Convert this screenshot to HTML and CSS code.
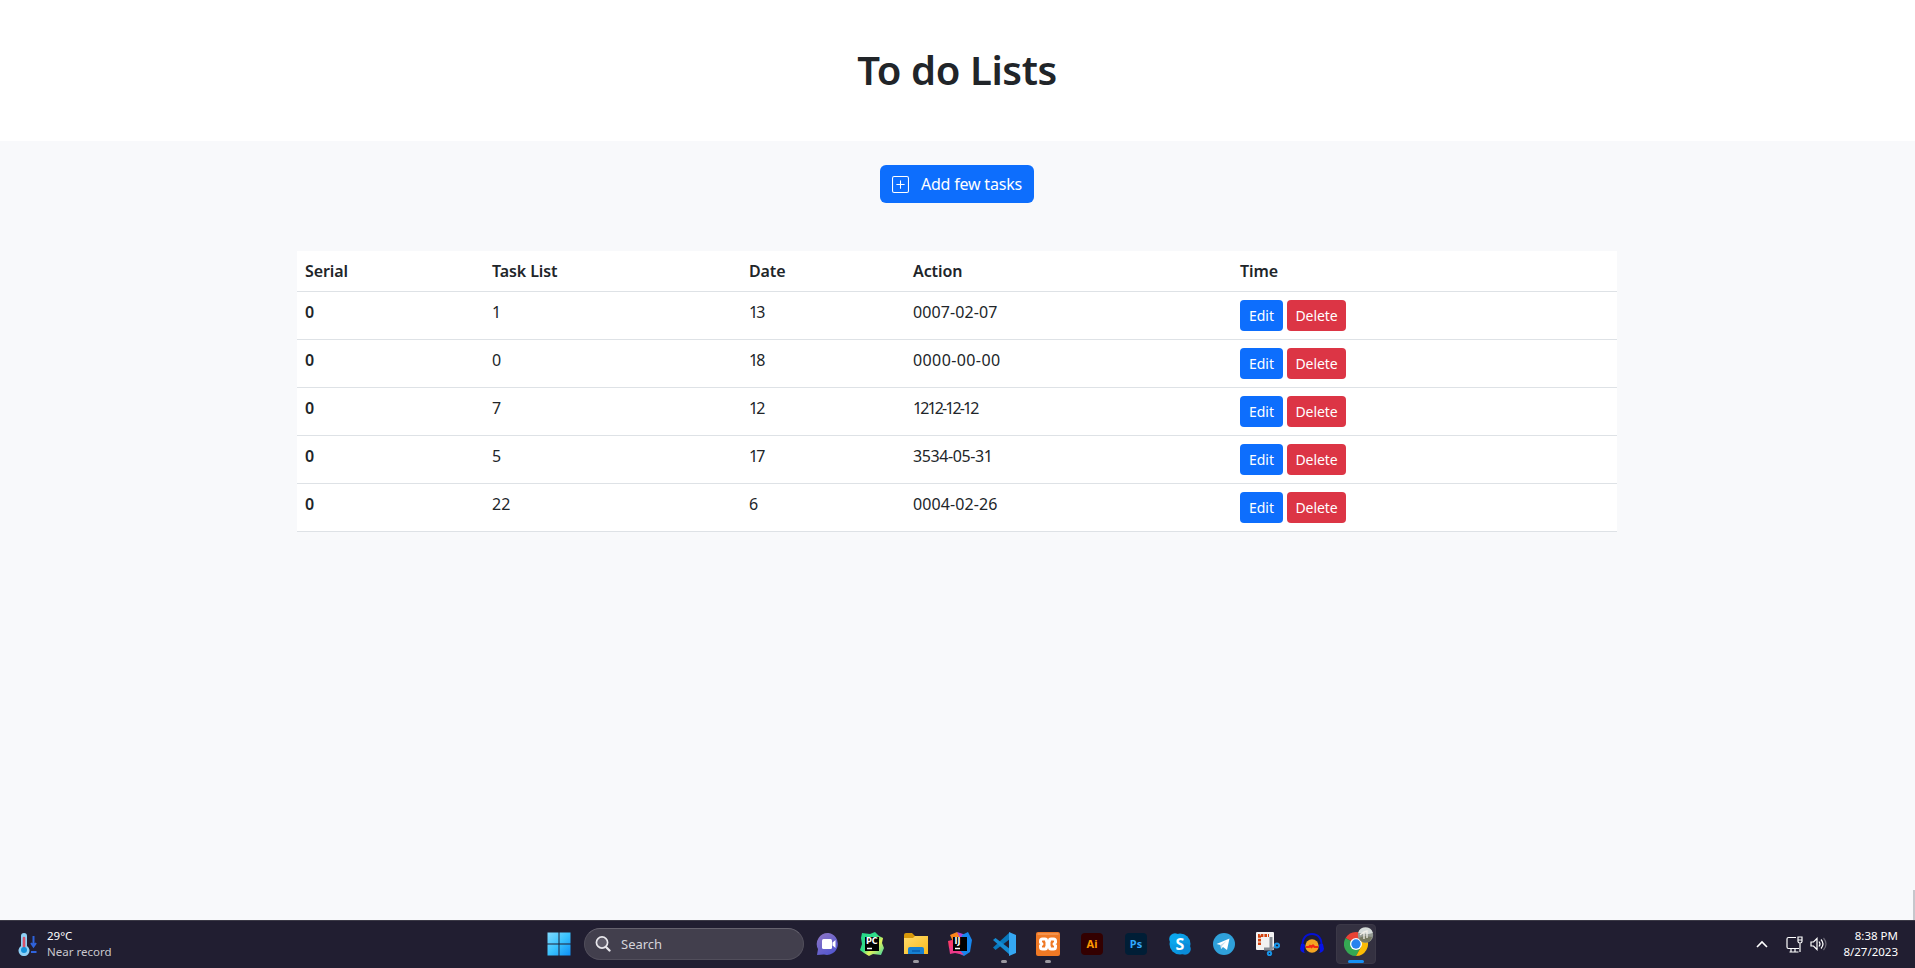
FILE: index.html
```html
<!DOCTYPE html>
<html lang="en">
<head>
<meta charset="utf-8">
<title>To do Lists</title>
<link rel="stylesheet" href="styles.css">
</head>
<body>
<header class="header"><h1>To do Lists</h1></header>
<main class="main">
  <button class="btn btn-add">
    <svg width="17" height="17" viewBox="0 0 16 16" fill="currentColor"><path d="M14 1a1 1 0 0 1 1 1v12a1 1 0 0 1-1 1H2a1 1 0 0 1-1-1V2a1 1 0 0 1 1-1h12zM2 0a2 2 0 0 0-2 2v12a2 2 0 0 0 2 2h12a2 2 0 0 0 2-2V2a2 2 0 0 0-2-2H2z"/><path d="M8 4a.5.5 0 0 1 .5.5v3h3a.5.5 0 0 1 0 1h-3v3a.5.5 0 0 1-1 0v-3h-3a.5.5 0 0 1 0-1h3v-3A.5.5 0 0 1 8 4z"/></svg>
    <span>Add few tasks</span>
  </button>
  <table class="tasks">
    <colgroup><col class="c1"><col class="c2"><col class="c3"><col class="c4"><col class="c5"></colgroup>
    <thead><tr><th>Serial</th><th>Task List</th><th>Date</th><th>Action</th><th>Time</th></tr></thead>
    <tbody>
      <tr><th>0</th><td>1</td><td class="tight">13</td><td>0007-02-07</td><td><div class="actions"><button class="btn edit">Edit</button><button class="btn delete">Delete</button></div></td></tr>
      <tr><th>0</th><td>0</td><td class="tight">18</td><td class="loose">0000-00-00</td><td><div class="actions"><button class="btn edit">Edit</button><button class="btn delete">Delete</button></div></td></tr>
      <tr><th>0</th><td>7</td><td class="tight">12</td><td class="tight">1212-12-12</td><td><div class="actions"><button class="btn edit">Edit</button><button class="btn delete">Delete</button></div></td></tr>
      <tr><th>0</th><td>5</td><td class="tight">17</td><td class="snug">3534-05-31</td><td><div class="actions"><button class="btn edit">Edit</button><button class="btn delete">Delete</button></div></td></tr>
      <tr><th>0</th><td>22</td><td>6</td><td>0004-02-26</td><td><div class="actions"><button class="btn edit">Edit</button><button class="btn delete">Delete</button></div></td></tr>
    </tbody>
  </table>
  <i class="scroll-edge"></i>
</main>
<footer class="taskbar">
  <div class="weather">
    <svg width="20" height="24" viewBox="0 0 20 24"><path d="M3 4a3 3 0 0 1 6 0v10a5.500 5.500 0 1 1-6 0z" fill="#8fd0f5"/><path d="M6 6v12" stroke="#d9536b" stroke-width="2.600" stroke-linecap="round"/><circle cx="6" cy="18" r="3" fill="#1391dc"/><path d="M15.500 4v10m-2.500-3 2.500 3.500 2.500-3.500M13 20h5.500" fill="none" stroke="#2f63dc" stroke-width="2"/></svg>
    <div class="weather-text"><span>29°C</span><span class="dim">Near record</span></div>
  </div>
  <div class="apps">
    <div class="app start"><svg width="24" height="24" viewBox="0 0 24 24"><defs><linearGradient id="win" x1="0" y1="0" x2="24" y2="24" gradientUnits="userSpaceOnUse"><stop stop-color="#84dcff"/><stop offset=".5" stop-color="#3ac2fd"/><stop offset="1" stop-color="#0b8df5"/></linearGradient></defs><path d="M.5.500h11v11H.5zM12.500.500h11v11h-11zM.5 12.500h11v11H.5zM12.500 12.500h11v11h-11z" fill="url(#win)"/></svg></div>
    <div class="search"><svg width="16" height="16" viewBox="0 0 16 16" fill="none" stroke="#e8e7ec"><circle cx="7" cy="6.500" r="5.600" stroke-width="1.700" fill="#5e5b69"/><path d="m11 11 3.500 3.500" stroke-width="2.300" stroke-linecap="round"/></svg><span>Search</span></div>
    <div class="app"><svg width="24" height="24" viewBox="0 0 24 24"><defs><linearGradient id="chat" x1="0" y1="0" x2=".6" y2="1"><stop stop-color="#9077c4"/><stop offset="1" stop-color="#5558cf"/></linearGradient></defs><path d="M12.500 1A11 11 0 1 1 8 22.500L1 23l1-6A11 11 0 0 1 12.500 1z" fill="url(#chat)"/><rect x="6" y="7" width="10" height="10" rx="1.500" fill="#fff"/><path d="m16.500 10.500 3-2.500v8l-3-2.500z" fill="#fff"/></svg></div>
    <div class="app"><svg width="24" height="24" viewBox="0 0 24 24"><defs><linearGradient id="pc" x1="0" y1="0" x2="1" y2="1"><stop stop-color="#21d789"/><stop offset=".45" stop-color="#34de8a"/><stop offset=".62" stop-color="#e5f15a"/><stop offset="1" stop-color="#30d1a4"/></linearGradient></defs><path d="m2 1 8 1 5-2 4 4 4 2-1 5 2 5-3 7-8-1-4 2-5-3-4-3 2-6-1-6z" fill="url(#pc)"/><path d="M5 5h14v14H5z"/><path d="M7 16.500h5" stroke="#fff" stroke-width="1.500"/><text x="6" y="12" class="ide-label">PC</text></svg></div>
    <div class="app running"><svg width="24" height="24" viewBox="0 0 24 24"><defs><linearGradient id="folder" x1="0" y1="0" x2="1" y2="1"><stop stop-color="#ffdc6a"/><stop offset="1" stop-color="#f8b91d"/></linearGradient></defs><path d="M0 3q0-2 2-2h6l3 3v5H0z" fill="#d79809"/><path d="M0 6h9l2-2h13v18H0z" fill="url(#folder)"/><path d="M4 22v-5q0-2 2-2h12q2 0 2 2v5z" fill="#1681d2"/><path d="M8 18h8v2H8z" fill="#0b66b8"/></svg></div>
    <div class="app"><svg width="24" height="24" viewBox="0 0 24 24"><path d="M2 3 9 0l4 5-6 9z" fill="#fa851c"/><path d="m9 0 9 3-5 5z" fill="#af46da"/><path d="m14 3 6-3 4 8-2 12-6 4-6-3z" fill="#1687ef"/><path d="M0 9 8 7l-1 11-6-2z" fill="#fc3a6a"/><path d="m1 15 7-1 8 9-9-2-5 1z" fill="#ec3989"/><path d="M5 5h14v14H5z"/><path d="M7 16.500h5" stroke="#fff" stroke-width="1.500"/><text x="6.500" y="12" class="ide-label">IJ</text></svg></div>
    <div class="app running"><svg width="24" height="24" viewBox="0 0 24 24"><path d="M17 1 1 15.500l2.500 2.500L18 7z" fill="#0878bd"/><path d="m1 8 2.500-2L18 17v6z" fill="#158bd2"/><path d="m17 0 7 3v18l-7 3z" fill="#35a7f2"/></svg></div>
    <div class="app running"><svg width="24" height="24" viewBox="0 0 24 24"><rect width="24" height="24" rx="2" fill="#ef7925"/><path d="M1.500 2h21" stroke="#f9ad73"/><path d="M9 7H6.500q-2 0-2 2v1.500L6 12l-1.500 1.500V15q0 2 2 2H9q1.500 0 1.500-1.500T12 14t1.500 1.500T15 17h2.500q2 0 2-2v-1.500L18 12l1.500-1.500V9q0-2-2-2H15q-1.500 0-1.500 1.500T12 10t-1.500-1.500T9 7zM9.500 12h5" fill="none" stroke="#fff" stroke-width="3" stroke-linejoin="round"/></svg></div>
    <div class="app"><svg width="24" height="24" viewBox="0 0 24 24"><rect x="1" y="1" width="22" height="22" rx="4" fill="#330000"/><text x="12" y="15.500" class="adobe" fill="#ff9a00">Ai</text></svg></div>
    <div class="app"><svg width="24" height="24" viewBox="0 0 24 24"><rect x="1" y="1" width="22" height="22" rx="4" fill="#001e36"/><text x="12" y="15.500" class="adobe" fill="#31a8ff">Ps</text></svg></div>
    <div class="app"><svg width="24" height="24" viewBox="0 0 24 24"><defs><linearGradient id="sky" x1="0" y1="0" x2="1" y2="1"><stop stop-color="#0aa8ee"/><stop offset="1" stop-color="#0a8bd8"/></linearGradient></defs><circle cx="12" cy="12" r="10.500" fill="url(#sky)"/><circle cx="7" cy="7" r="5.800" fill="#0ba6ed"/><circle cx="17" cy="17" r="5.800" fill="#0a8bd8"/><text x="12" y="17.500" class="skype">S</text></svg></div>
    <div class="app"><svg width="24" height="24" viewBox="0 0 24 24"><circle cx="12" cy="12" r="11" fill="#2fa1da"/><path d="m4.500 12 13-5.500-2.500 11.500-4-3-2 2-.5-4z" fill="#fff"/><path d="m8.500 13 6-4-4.500 5-.5 3z" fill="#c2dced"/></svg></div>
    <div class="app"><svg width="24" height="24" viewBox="0 0 24 24"><rect width="18" height="18" y="0" rx="1" fill="#f2f2f2"/><path d="M3.500 13V3.500H13" fill="none" stroke="#d2400c" stroke-width="3" stroke-dasharray="2.600 1"/><path d="M15 5v12H8" fill="none" stroke="#858b93" stroke-width="3"/><path d="m14 18 6-4" stroke="#8c949c" stroke-width="2"/><circle cx="21" cy="13.500" r="2.100" fill="none" stroke="#1793e6" stroke-width="2"/><circle cx="13.500" cy="21.500" r="1.700" fill="none" stroke="#1793e6" stroke-width="2"/></svg></div>
    <div class="app"><svg width="24" height="24" viewBox="0 0 24 24"><circle cx="12" cy="14" r="6.700" fill="#f4a522"/><path d="M6 15h3l1-1 1.500 1 1.500-1.500 1.500 1.500H18" fill="none" stroke="#f22914" stroke-width="2.200"/><path d="M2.500 15C2 6 6 2 12 2s10 4 9.500 13" fill="none" stroke="#0510d7" stroke-width="2"/><path d="M1 12q3-1 4 1l-1 6q0 2 2 2-5 0-6-4zM23 12q-3-1-4 1l1 6q0 2-2 2 5 0 6-4z" fill="#0713e8"/></svg></div>
    <div class="app active"><svg width="30" height="34" viewBox="0 0 30 34"><path d="M12 18 1.600 12A12 12 0 0 1 22.400 12z" fill="#e94335"/><path d="M12 18 1.600 12A12 12 0 0 0 12 30l5-9z" fill="#35a853"/><path d="m12 18 10.400-6A12 12 0 0 1 12 30l5-9z" fill="#fbbc05"/><circle cx="12" cy="18" r="6" fill="#fff"/><circle cx="12" cy="18" r="4.700" fill="#2883ee"/><circle cx="21.500" cy="9" r="7.700" fill="#939992"/><path d="M14.200 7a7.600 7.600 0 0 1 14.600 0l-4 1z" fill="#d4dad9"/><path d="m15 12 5-2 8 1-2 4q-5 3-9 0z" fill="#777961"/><path d="M20 13V6l3-1v7M16 9l4-3" fill="none" stroke="#f1eee8" stroke-width="1.300"/></svg></div>
  </div>
  <div class="tray">
    <svg class="chevron" width="12" height="8" viewBox="0 0 12 8"><path d="m1 7 5-5 5 5" fill="none" stroke="#fff" stroke-width="1.600"/></svg>
    <svg class="network" width="17" height="17" viewBox="0 0 17 17" fill="none" stroke="#fff" stroke-width="1.200"><path d="M10 1.500H2.500q-1.500 0-1.500 1.500v8q0 1.500 1.500 1.500H13M5 12.500V16m4-3.500V16M3.500 16h9M14 7v9M12 1h4v4.500q0 1.500-2 1.500t-2-1.500zM12 4h4"/></svg>
    <svg width="17" height="14" viewBox="0 0 17 14" fill="none" stroke="#fff" stroke-width="1.200"><path d="M1 5h2.500L7 1.500v11L3.500 9H1zM9 4.500q2 2.500 0 5M11 2.500q4 4.500 0 9"/><path d="M13.500 1q5 6 0 12" stroke="#6b6875"/></svg>
    <div class="clock"><span>8:38 PM</span><span>8/27/2023</span></div>
  </div>
</footer>
</body>
</html>
```
FILE: styles.css
```css
* { box-sizing: border-box; }
body { margin: 0; height: 968px; display: flex; flex-direction: column; overflow: hidden; background: #f8f9fa; color: #212529; font: 16px/24px "Noto Sans", sans-serif; }
.header { height: 141px; flex: none; display: flex; align-items: center; justify-content: center; padding: 0 1px 2px 0; background: #fff; }
h1 { margin: 0; font-size: 40px; line-height: 48px; font-weight: 600; letter-spacing: -.4px; }
.main { position: relative; flex: 1; display: flex; flex-direction: column; align-items: center; padding: 24px 1px 0 0; background: #f8f9fb; }
.btn { border: 0; margin: 0; color: #fff; font-family: inherit; background: #0d6efd; }
.btn-add { width: 154px; height: 38px; padding: 0 12px; border-radius: 6px; display: flex; align-items: center; justify-content: space-between; font-size: 16px; letter-spacing: -.2px; white-space: nowrap; }
.tasks { width: 1320px; margin-top: 48px; border-collapse: separate; border-spacing: 0; table-layout: fixed; background: #fff; font-family: "Noto Sans", sans-serif; }
.c1 { width: 187px; }
.c2 { width: 257px; }
.c3 { width: 164px; }
.c4 { width: 327px; }
.tasks th, .tasks td { padding: 8px; text-align: left; vertical-align: top; border-bottom: 1px solid #dee2e6; }
.tasks td { letter-spacing: .1px; }
.tasks th { font-weight: 600; letter-spacing: -.1px; }
.tasks thead tr { height: 41px; }
.tasks tbody tr { height: 48px; }
.tasks .tight { letter-spacing: -1.9px; }
.tasks .snug { letter-spacing: -.4px; }
.tasks .loose { letter-spacing: .4px; }
.actions { display: flex; gap: 4px; }
.edit, .delete { height: 31px; border-radius: 4px; padding: 0; font-size: 14px; line-height: 21px; }
.edit { width: 43px; }
.delete { width: 59px; background: #dc3545; letter-spacing: -.1px; }
.scroll-edge { position: absolute; right: 0; bottom: 0; width: 2px; height: 30px; background: #c5c7cc; }
.taskbar { height: 48px; flex: none; display: grid; grid-template-columns: 538px 1fr auto; align-items: center; padding-bottom: 1px; background: #211e31; border-top: 1px solid #3b3946; color: #fff; font: 11.500px/16px "Noto Sans", sans-serif; }
.weather { display: flex; align-items: center; gap: 9px; padding-left: 18px; }
.weather-text, .clock { display: flex; flex-direction: column; }
.dim { color: #c9c8ce; }
.apps { display: flex; align-items: center; gap: 4px; }
.app { position: relative; width: 40px; height: 40px; display: flex; align-items: center; justify-content: center; }
.start { width: 42px; }
.search { width: 220px; height: 32px; border-radius: 16px; display: flex; align-items: center; gap: 10px; padding-left: 10px; background: #423f4d; border: 1px solid #514e5b; border-top-color: #65626e; color: #d5d4da; font-size: 13px; }
.running::after, .active::after { content: ""; position: absolute; left: 17px; bottom: 1px; width: 6px; height: 3px; border-radius: 2px; background: #9b99a0; }
.active { border-radius: 4px; background: #343141; border: 1px solid #3b3847; }
.active svg { position: absolute; left: 7px; top: 1px; }
.active::after { left: 11px; bottom: 0; width: 16px; background: #1690f3; }
.ide-label { font: 700 8px "DejaVu Sans", sans-serif; fill: #fff; }
.adobe { font: 700 11px "Noto Sans", sans-serif; text-anchor: middle; }
.skype { font: 700 16px "Noto Sans", sans-serif; text-anchor: middle; fill: #fff; }
.tray { display: flex; align-items: center; padding-right: 17px; }
.chevron { margin-right: 18px; }
.network { margin-right: 7px; }
.clock { width: 71px; text-align: right; }
```
